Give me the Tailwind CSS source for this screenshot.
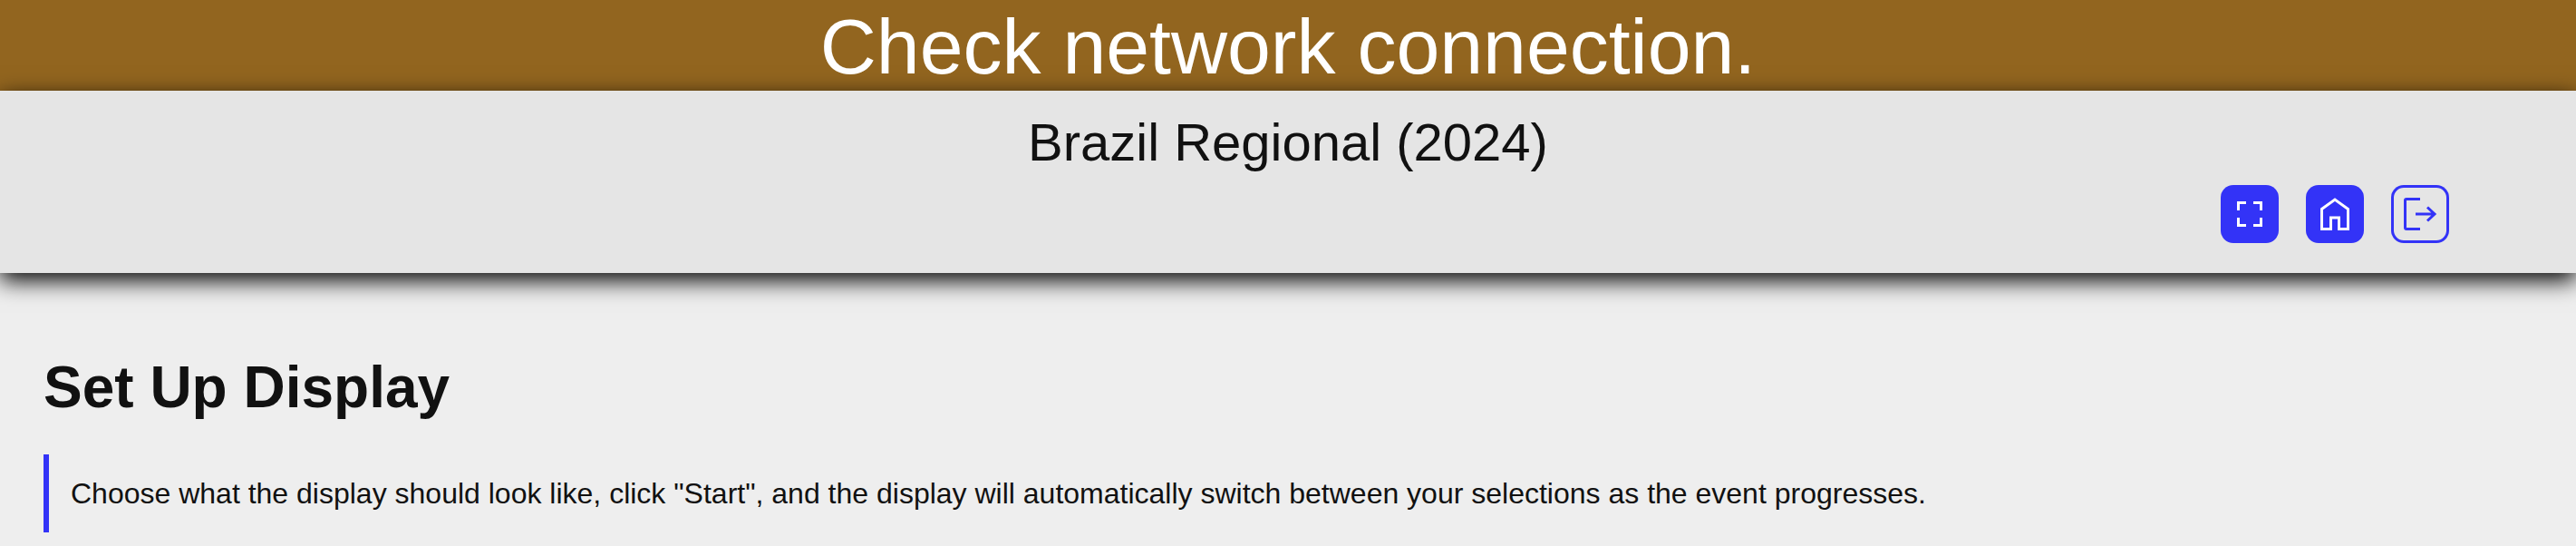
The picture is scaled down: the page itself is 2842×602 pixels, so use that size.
<!DOCTYPE html>
<html lang="en">
<head>
<meta charset="utf-8">
<meta name="viewport" content="width=device-width, initial-scale=1">
<title>Set Up Display</title>
<script src="https://cdn.jsdelivr.net/npm/@tailwindcss/browser@4"></script>
</head>
<body class="min-h-screen overflow-x-hidden bg-[#eeeeee] font-['Liberation_Sans',Arial,sans-serif] text-[#111111]">
<div role="alert" class="bg-[#92651f] pt-[3px] pb-px text-center text-[86px] leading-[96px] text-white">Check network connection.</div>
<header class="relative bg-[#e5e5e5] px-[140px] pt-6 pb-[33px] shadow-[0_8px_24px_black]">
  <p class="text-center text-[58px] leading-[66px]">Brazil Regional (2024)</p>
  <nav aria-label="Page actions" class="mt-[14px] flex justify-end gap-[30px]">
    <button type="button" aria-label="Full screen" class="size-16 rounded-[14px] bg-[#3333f7] text-white">
      <svg viewBox="0 0 64 64" class="size-16" fill="none" stroke="currentColor" stroke-width="3"><path d="M19.5 28V19.5H28M36 19.5H44.5V28M44.5 36V44.5H36M28 44.5H19.5V36"/></svg>
    </button>
    <a href="#home" aria-label="Home" class="size-16 rounded-[14px] bg-[#3333f7] text-white">
      <svg viewBox="0 0 64 64" class="size-16" fill="none" stroke="currentColor" stroke-width="3"><path d="M17.5 26.500L32 16L46.500 26.500V48.500H36.500V36H27.500V48.500H17.500Z"/></svg>
    </a>
    <button type="button" aria-label="Log out" class="size-16 rounded-[14px] text-[#3333f7] ring-3 ring-inset ring-[#3333f7]">
      <svg viewBox="0 0 64 64" class="size-16" fill="none" stroke="currentColor" stroke-width="3"><path d="M32 15.500H17Q15.500 15.500 15.500 17V47Q15.500 48.500 17 48.500H32M27 32H48M40 24.500L48 32L40 39.500"/></svg>
    </button>
  </nav>
</header>
<main class="px-12 pt-[90px]">
  <h1 class="text-[64px] leading-[72px] font-bold">Set Up Display</h1>
  <p class="mt-[38px] border-l-6 border-[#3333f7] py-6 pl-6 text-[32px] leading-[38px]">Choose what the display should look like, click "Start", and the display will automatically switch between your selections as the event progresses.</p>
</main>
</body>
</html>
